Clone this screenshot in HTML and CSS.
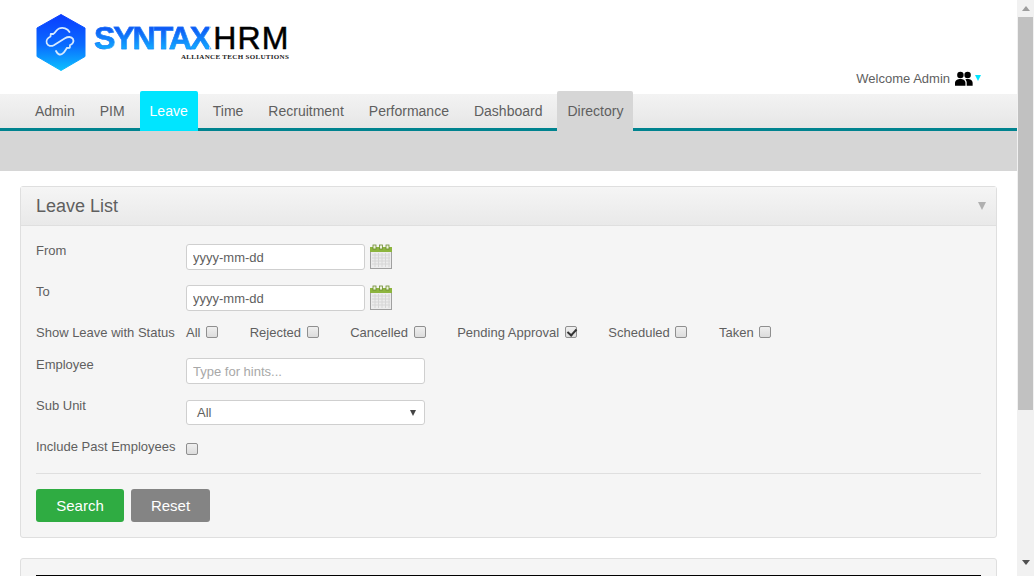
FILE: index.html
```html
<!DOCTYPE html>
<html lang="en">
<head>
<meta charset="utf-8">
<title>Leave List</title>
<link rel="stylesheet" href="styles.css">
</head>
<body>
<div class="page">
  <header class="top">
    <div class="logo">
      <svg class="logo-mark" width="50" height="58" viewBox="0 0 50 58">
        <defs>
          <linearGradient id="hex" x1="0" y1="0" x2="0" y2="1">
            <stop offset="0" stop-color="#0a3cff"/>
            <stop offset="0.55" stop-color="#0a6cff"/>
            <stop offset="1" stop-color="#0cc0ff"/>
          </linearGradient>
        </defs>
        <path d="M25 0.500 L49 14 V42.500 L25 56.500 L1 42.500 V14 Z" fill="url(#hex)" stroke="url(#hex)" stroke-linejoin="round"/>
        <path d="M33.500 18 C31.500 14.500 27 12.800 23 14.500 C20 15.800 20 18.500 17.300 20 L14.800 19.800 L14.500 22.500 C11.500 24 9.800 26.800 10.800 29.300 C11.800 32 15.200 32.600 17.800 31.200 L29 24.300 C31.800 22.600 35.400 22.300 37 25 C38.200 27.500 36.800 30.200 34 31.200 L33.800 33.800 L30.800 34 C29.500 36 28.500 38.700 26 40 C23.500 41.300 21.500 40 20 37" fill="none" stroke="#d6eaff" stroke-width="1.800" stroke-linecap="round" stroke-linejoin="round"/>
      </svg>
      <div class="logo-words">
        <div class="logo-name"><span class="syntax">SYNTAX</span><span class="hrm">HRM</span></div>
        <div class="logo-sub">ALLIANCE TECH SOLUTIONS</div>
      </div>
    </div>
    <div class="welcome">
      <span>Welcome Admin</span>
      <svg width="18" height="15" viewBox="0 0 20 16" fill="#000">
        <circle cx="6" cy="4" r="3.600"/>
        <circle cx="14" cy="4" r="3.600"/>
        <path d="M0 16 V13 C0 10 3 8.600 6 8.600 C9 8.600 11.600 10 11.600 13 V16 Z"/>
        <path d="M13 16 V12.500 C13 11 12.500 10 11.500 9 C12.400 8.700 13.200 8.600 14 8.600 C17 8.600 19.600 10 19.600 13 V16 Z"/>
      </svg>
      <span class="caret"></span>
    </div>
  </header>

  <nav class="menu">
    <a class="tab" href="#">Admin</a>
    <a class="tab" href="#">PIM</a>
    <a class="tab tab-active" href="#">Leave</a>
    <a class="tab" href="#">Time</a>
    <a class="tab" href="#">Recruitment</a>
    <a class="tab" href="#">Performance</a>
    <a class="tab" href="#">Dashboard</a>
    <a class="tab tab-current" href="#">Directory</a>
  </nav>
  <div class="subbar"></div>

  <main class="content">
    <section class="panel">
      <div class="panel-head">
        <h1>Leave List</h1>
        <span class="collapse"></span>
      </div>
      <form class="panel-body">
        <div class="row row-date">
          <label class="label">From</label>
          <input class="field field-date" type="text" value="yyyy-mm-dd">
          <svg class="cal" width="22" height="25" viewBox="0 0 22 25">
            <rect x="0.500" y="3.500" width="21" height="21" fill="#ececec" stroke="#a0a0a0"/>
            <rect x="0" y="3" width="22" height="5" fill="#8db53f"/>
            <rect x="3" y="1" width="3" height="4" fill="#eef4dc" stroke="#6c8a30" stroke-width="0.800"/>
            <rect x="9.500" y="1" width="3" height="4" fill="#eef4dc" stroke="#6c8a30" stroke-width="0.800"/>
            <rect x="16" y="1" width="3" height="4" fill="#eef4dc" stroke="#6c8a30" stroke-width="0.800"/>
            <path d="M2 11 H20 M2 14 H20 M2 17 H20 M2 20 H20 M5 9 V23 M8.500 9 V23 M12 9 V23 M15.500 9 V23 M19 9 V23" stroke="#d6d6d6" stroke-width="1"/>
          </svg>
        </div>
        <div class="row row-date">
          <label class="label">To</label>
          <input class="field field-date" type="text" value="yyyy-mm-dd">
          <svg class="cal" width="22" height="25" viewBox="0 0 22 25">
            <rect x="0.500" y="3.500" width="21" height="21" fill="#ececec" stroke="#a0a0a0"/>
            <rect x="0" y="3" width="22" height="5" fill="#8db53f"/>
            <rect x="3" y="1" width="3" height="4" fill="#eef4dc" stroke="#6c8a30" stroke-width="0.800"/>
            <rect x="9.500" y="1" width="3" height="4" fill="#eef4dc" stroke="#6c8a30" stroke-width="0.800"/>
            <rect x="16" y="1" width="3" height="4" fill="#eef4dc" stroke="#6c8a30" stroke-width="0.800"/>
            <path d="M2 11 H20 M2 14 H20 M2 17 H20 M2 20 H20 M5 9 V23 M8.500 9 V23 M12 9 V23 M15.500 9 V23 M19 9 V23" stroke="#d6d6d6" stroke-width="1"/>
          </svg>
        </div>
        <div class="row row-status">
          <label class="label">Show Leave with Status</label>
          <div class="statuses">
            <label class="status">All <input class="check" type="checkbox"></label>
            <label class="status">Rejected <input class="check" type="checkbox"></label>
            <label class="status">Cancelled <input class="check" type="checkbox"></label>
            <label class="status">Pending Approval <input class="check" type="checkbox" checked></label>
            <label class="status">Scheduled <input class="check" type="checkbox"></label>
            <label class="status">Taken <input class="check" type="checkbox"></label>
          </div>
        </div>
        <div class="row row-employee">
          <label class="label">Employee</label>
          <input class="field field-wide" type="text" placeholder="Type for hints...">
        </div>
        <div class="row row-unit">
          <label class="label label-high">Sub Unit</label>
          <div class="select"><span>All</span><span class="select-caret"></span></div>
        </div>
        <div class="row row-past">
          <label class="label label-high">Include Past Employees</label>
          <input class="check check-past" type="checkbox">
        </div>
        <div class="rule"></div>
        <div class="actions">
          <button class="btn btn-search" type="button">Search</button>
          <button class="btn btn-reset" type="button">Reset</button>
        </div>
      </form>
    </section>
    <section class="panel panel-next">
      <div class="black-line"></div>
    </section>
  </main>
</div>
<div class="scrollbar">
  <span class="arrow-up"></span>
  <span class="thumb"></span>
  <span class="arrow-down"></span>
</div>
</body>
</html>
```
FILE: styles.css
```css
* { box-sizing: border-box; }
html, body { margin: 0; height: 100%; overflow: hidden; }
body {
  display: flex;
  font-family: "Liberation Sans", Arial, sans-serif;
  font-size: 13px;
  color: #5f5f5f;
  background: #fff;
}
.page { flex: 0 0 1017px; width: 1017px; height: 576px; overflow: hidden; }

/* scrollbar */
.scrollbar {
  flex: 0 0 17px;
  height: 576px;
  background: #f1f1f1;
  display: flex;
  flex-direction: column;
  align-items: center;
}
.arrow-up {
  width: 0; height: 0; margin-top: 6px;
  border-left: 4px solid transparent;
  border-right: 4px solid transparent;
  border-bottom: 5px solid #9d9d9d;
}
.thumb { width: 15px; height: 393px; margin-top: 6px; background: #c1c1c1; }
.arrow-down {
  width: 0; height: 0; margin-top: 150px;
  border-left: 4px solid transparent;
  border-right: 4px solid transparent;
  border-top: 5px solid #505050;
}

/* header */
.top {
  height: 94px;
  display: flex;
  justify-content: space-between;
  padding: 14px 36px 0 36px;
}
.logo { display: flex; align-items: flex-start; }
.logo-words { margin-left: 8px; padding-top: 9px; }
.logo-name { display: flex; align-items: baseline; height: 30px; line-height: 30px; font-size: 32px; }
.syntax {
  font-weight: 700;
  letter-spacing: -2.05px;
  margin-right: 4px;
  background: linear-gradient(180deg, #0f55f5 15%, #10aaff 85%);
  -webkit-background-clip: text;
  background-clip: text;
  color: transparent;
  -webkit-text-stroke: 0.5px #1a80fa;
}
.hrm { color: #000; font-size: 32px; letter-spacing: 1.2px; -webkit-text-stroke: 0.5px #000; }
.logo-sub {
  margin: 0 0 0 87px;
  font-family: "Liberation Serif", serif;
  font-weight: 700;
  font-size: 7px;
  line-height: 8px;
  letter-spacing: 0.31px;
  color: #222;
  white-space: nowrap;
}
.welcome {
  display: flex;
  align-items: center;
  height: 18px;
  margin-top: 55px;
}
.welcome svg { margin-left: 5px; }
.caret {
  width: 0; height: 0; margin-left: 2px;
  border-left: 3px solid transparent;
  border-right: 3px solid transparent;
  border-top: 6px solid #00e5ff;
}

/* nav */
.menu {
  display: flex;
  gap: 5px;
  height: 37px;
  padding-left: 25px;
  background: linear-gradient(#f3f3f3, #e6e6e6);
  border-bottom: 3px solid #00838f;
  font-size: 14px;
}
.tab {
  display: block;
  height: 40px;
  margin-top: -3px;
  padding: 12px 10px 0;
  line-height: 16px;
  color: #5f5f5f;
  text-decoration: none;
  border-radius: 2px 2px 0 0;
}
.tab-active { background: #00e5ff; color: #fff; }
.tab-current { background: #d6d6d6; }
.subbar { height: 40px; background: #d6d6d6; }

/* panels */
.content { padding: 15px 20px 0; }
.panel {
  background: #f5f5f5;
  border: 1px solid #dfdfdf;
  border-radius: 3px;
}
.panel-head {
  height: 39px;
  padding: 0 15px;
  display: flex;
  align-items: center;
  justify-content: space-between;
  background: linear-gradient(#f5f5f5, #e9e9e9);
  border-bottom: 1px solid #dfdfdf;
}
.panel-head h1 { margin: 0; font-size: 18px; font-weight: 400; color: #5f5f5f; }
.collapse {
  width: 0; height: 0; margin-right: -5px;
  border-left: 4px solid transparent;
  border-right: 4px solid transparent;
  border-top: 8px solid #b0b0b0;
}
.panel-body { padding: 18px 15px 15px; }
.row { display: flex; align-items: flex-start; }
.label { flex: 0 0 150px; line-height: 14px; white-space: nowrap; }
.label-high { margin-top: -1px; }
.row-date { height: 41px; }
.field {
  height: 26px;
  padding: 0 6px;
  border: 1px solid #cfcfcf;
  border-radius: 3px;
  background: #fff;
  font: 13px "Liberation Sans", Arial, sans-serif;
  color: #5f5f5f;
}
.field::placeholder { color: #a8a8a8; opacity: 1; }
.field-date { width: 179px; }
.field-wide { width: 239px; }
.cal { margin-left: 5px; }

.row-status { height: 32px; }
.statuses { display: flex; margin-top: -1px; }
.status { display: flex; align-items: center; height: 14px; margin-right: 31.6px; white-space: pre; }
.check {
  appearance: none;
  -webkit-appearance: none;
  width: 12px;
  height: 12px;
  margin: 0 0 0 2px;
  flex: none;
  border: 1px solid #8f8f8f;
  border-radius: 2px;
  background: linear-gradient(#efefef, #dcdcdc);
}
.check:checked { position: relative; }
.check:checked::after {
  content: "";
  position: absolute;
  left: 3px; top: 0;
  width: 4px; height: 7px;
  border: solid #333;
  border-width: 0 2px 2px 0;
  transform: rotate(42deg);
}
.row-employee { height: 42px; }
.row-unit { height: 41px; }
.select {
  width: 239px;
  height: 25px;
  padding: 0 8px 0 10px;
  display: flex;
  align-items: center;
  justify-content: space-between;
  border: 1px solid #cfcfcf;
  border-radius: 3px;
  background: #fff;
}
.select-caret {
  width: 0; height: 0;
  border-left: 3px solid transparent;
  border-right: 3px solid transparent;
  border-top: 6px solid #444;
}
.row-past { height: 32px; }
.check-past { margin: 2px 0 0 0; }
.rule { height: 1px; background: #dfdfdf; }
.actions { display: flex; gap: 7px; margin-top: 15px; }
.btn {
  height: 33px;
  border: 0;
  border-radius: 3px;
  color: #fff;
  font: 15px "Liberation Sans", Arial, sans-serif;
}
.btn-search { width: 88px; background: #2fac42; }
.btn-reset { width: 79px; background: #848484; }

.panel-next { margin-top: 20px; height: 60px; padding: 16px 15px 0; }
.black-line { height: 2px; background: #000; }
```
